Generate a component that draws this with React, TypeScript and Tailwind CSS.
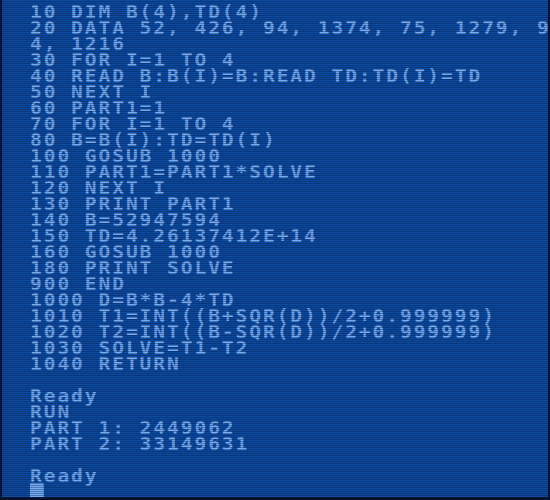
import React from "react";

const lines: string[] = [
  "10 DIM B(4),TD(4)",
  "20 DATA 52, 426, 94, 1374, 75, 1279, 9",
  "4, 1216",
  "30 FOR I=1 TO 4",
  "40 READ B:B(I)=B:READ TD:TD(I)=TD",
  "50 NEXT I",
  "60 PART1=1",
  "70 FOR I=1 TO 4",
  "80 B=B(I):TD=TD(I)",
  "100 GOSUB 1000",
  "110 PART1=PART1*SOLVE",
  "120 NEXT I",
  "130 PRINT PART1",
  "140 B=52947594",
  "150 TD=4.26137412E+14",
  "160 GOSUB 1000",
  "180 PRINT SOLVE",
  "900 END",
  "1000 D=B*B-4*TD",
  "1010 T1=INT((B+SQR(D))/2+0.999999)",
  "1020 T2=INT((B-SQR(D))/2+0.999999)",
  "1030 SOLVE=T1-T2",
  "1040 RETURN",
  "",
  "Ready",
  "RUN",
  "PART 1: 2449062",
  "PART 2: 33149631",
  "",
  "Ready",
];

export default function App() {
  return (
    <div className="w-[550px] h-[500px] bg-[#03112e] overflow-hidden">
      <div className="relative ml-[2px] w-[546px] h-[497px] bg-[#0c4b9e] overflow-hidden">
        <div className="pl-[28px] pt-[4px]">
          <div
            className="origin-left scale-x-[1.15] text-[#74acf2] text-[17px] leading-[16px] font-bold tracking-[1.68px] whitespace-pre"
            style={{ fontFamily: '"DejaVu Sans Mono", "Liberation Mono", monospace' }}
          >
            {lines.map((l, i) => (
              <div key={i} className="h-[16px]">
                {l === "" ? "\u00a0" : l}
              </div>
            ))}
            <div className="h-[16px] flex items-start">
              <div className="w-[12px] h-[16px] -mt-[1px] bg-[#74acf2]" />
            </div>
          </div>
        </div>
        <div className="absolute inset-0 pointer-events-none bg-[repeating-linear-gradient(to_bottom,rgba(0,0,0,0)_0px,rgba(0,0,0,0)_1px,rgba(2,16,60,0.35)_1px,rgba(2,16,60,0.35)_2px)]" />
      </div>
    </div>
  );
}
